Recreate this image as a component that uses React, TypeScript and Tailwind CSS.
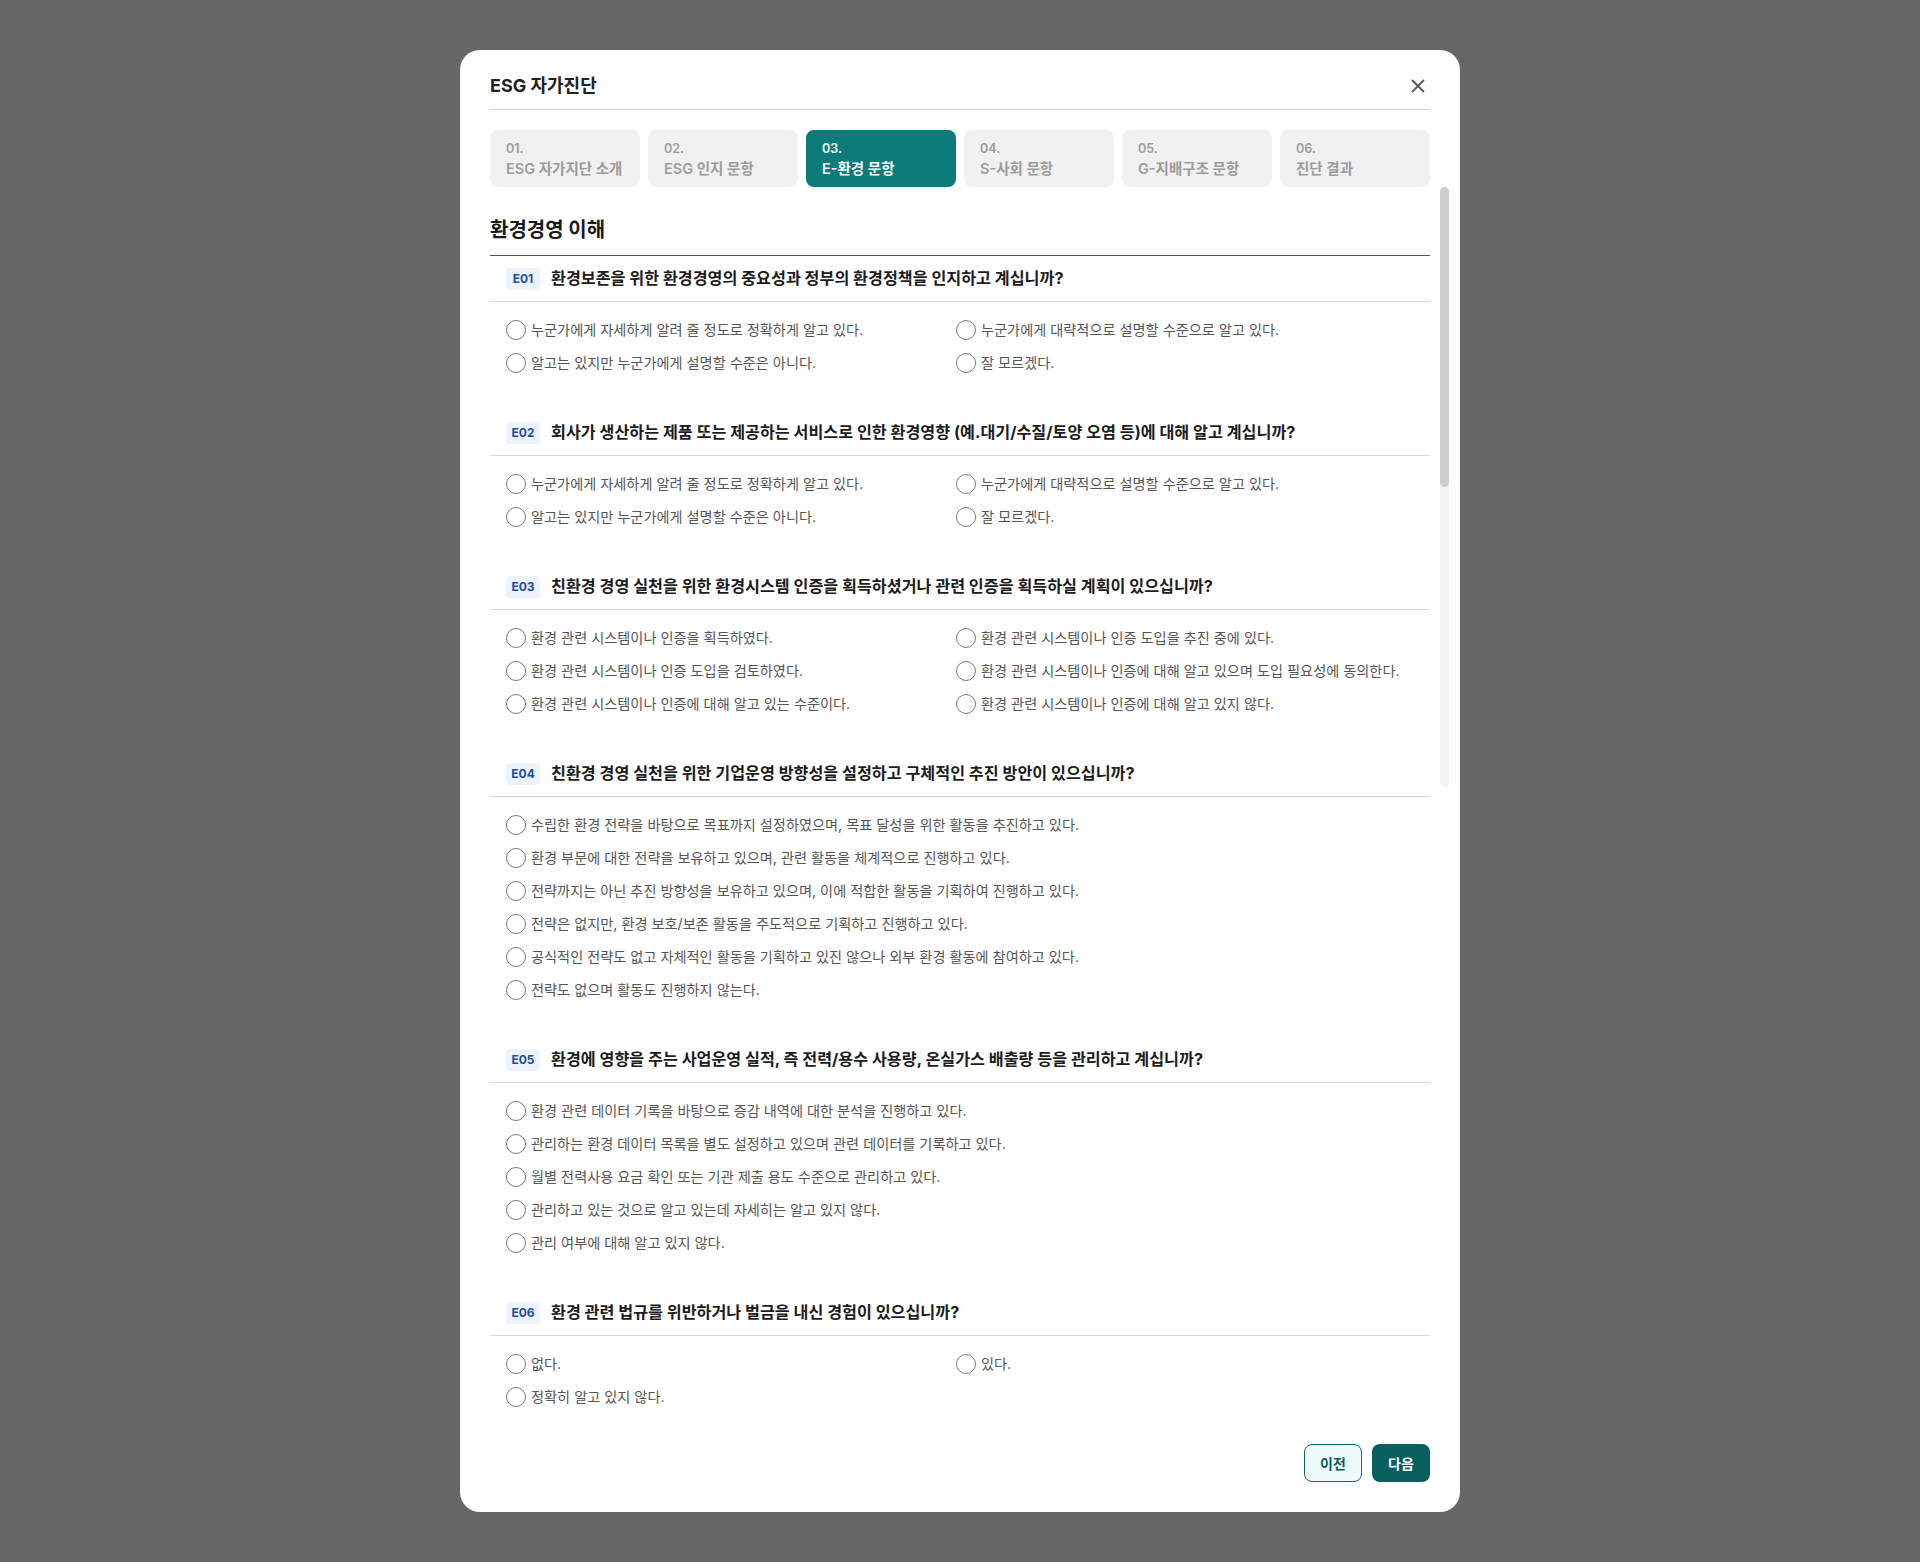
import React from "react";

type Question = {
  code: string;
  title: string;
  options: string[];
  cols: 1 | 2;
};

const knowOptions = [
  "누군가에게 자세하게 알려 줄 정도로 정확하게 알고 있다.",
  "누군가에게 대략적으로 설명할 수준으로 알고 있다.",
  "알고는 있지만 누군가에게 설명할 수준은 아니다.",
  "잘 모르겠다.",
];

const questions: Question[] = [
  {
    code: "E01",
    title: "환경보존을 위한 환경경영의 중요성과 정부의 환경정책을 인지하고 계십니까?",
    options: knowOptions,
    cols: 2,
  },
  {
    code: "E02",
    title:
      "회사가 생산하는 제품 또는 제공하는 서비스로 인한 환경영향 (예.대기/수질/토양 오염 등)에 대해 알고 계십니까?",
    options: knowOptions,
    cols: 2,
  },
  {
    code: "E03",
    title:
      "친환경 경영 실천을 위한 환경시스템 인증을 획득하셨거나 관련 인증을 획득하실 계획이 있으십니까?",
    options: [
      "환경 관련 시스템이나 인증을 획득하였다.",
      "환경 관련 시스템이나 인증 도입을 추진 중에 있다.",
      "환경 관련 시스템이나 인증 도입을 검토하였다.",
      "환경 관련 시스템이나 인증에 대해 알고 있으며 도입 필요성에 동의한다.",
      "환경 관련 시스템이나 인증에 대해 알고 있는 수준이다.",
      "환경 관련 시스템이나 인증에 대해 알고 있지 않다.",
    ],
    cols: 2,
  },
  {
    code: "E04",
    title: "친환경 경영 실천을 위한 기업운영 방향성을 설정하고 구체적인 추진 방안이 있으십니까?",
    options: [
      "수립한 환경 전략을 바탕으로 목표까지 설정하였으며, 목표 달성을 위한 활동을 추진하고 있다.",
      "환경 부문에 대한 전략을 보유하고 있으며, 관련 활동을 체계적으로 진행하고 있다.",
      "전략까지는 아닌 추진 방향성을 보유하고 있으며, 이에 적합한 활동을 기획하여 진행하고 있다.",
      "전략은 없지만, 환경 보호/보존 활동을 주도적으로 기획하고 진행하고 있다.",
      "공식적인 전략도 없고 자체적인 활동을 기획하고 있진 않으나 외부 환경 활동에 참여하고 있다.",
      "전략도 없으며 활동도 진행하지 않는다.",
    ],
    cols: 1,
  },
  {
    code: "E05",
    title:
      "환경에 영향을 주는 사업운영 실적, 즉 전력/용수 사용량, 온실가스 배출량 등을 관리하고 계십니까?",
    options: [
      "환경 관련 데이터 기록을 바탕으로 증감 내역에 대한 분석을 진행하고 있다.",
      "관리하는 환경 데이터 목록을 별도 설정하고 있으며 관련 데이터를 기록하고 있다.",
      "월별 전력사용 요금 확인 또는 기관 제출 용도 수준으로 관리하고 있다.",
      "관리하고 있는 것으로 알고 있는데 자세히는 알고 있지 않다.",
      "관리 여부에 대해 알고 있지 않다.",
    ],
    cols: 1,
  },
  {
    code: "E06",
    title: "환경 관련 법규를 위반하거나 벌금을 내신 경험이 있으십니까?",
    options: ["없다.", "있다.", "정확히 알고 있지 않다."],
    cols: 2,
  },
];

const steps = [
  { no: "01.", label: "ESG 자가지단 소개" },
  { no: "02.", label: "ESG 인지 문항" },
  { no: "03.", label: "E-환경 문항" },
  { no: "04.", label: "S-사회 문항" },
  { no: "05.", label: "G-지배구조 문항" },
  { no: "06.", label: "진단 결과" },
];

const active = 2;

const App: React.FC = () => {
  return (
    <div
      className="min-h-[1562px] w-full bg-[#666666] flex justify-center items-start pt-[50px]"
      style={{ fontFamily: 'Inter, "Noto Sans CJK KR", "Noto Sans", sans-serif' }}
    >
      <div className="relative w-[1000px] rounded-[20px] bg-white px-[30px] pt-[23px] pb-[30px]">
        {/* header */}
        <div className="flex items-center justify-between h-[26px]">
          <h1 className="text-[18px] leading-[26px] font-bold text-[#222222]">ESG 자가진단</h1>
          <button type="button" className="w-6 h-6 flex items-center justify-center">
            <svg width="14" height="14" viewBox="0 0 14 14" fill="none">
              <path d="M1 1L13 13M13 1L1 13" stroke="#5a5a5a" strokeWidth="1.9" />
            </svg>
          </button>
        </div>
        <div className="mt-[10px] h-px bg-[#d4d4d4]" />

        {/* steps */}
        <div className="mt-5 grid grid-cols-6 gap-2">
          {steps.map((s, i) => (
            <div
              key={s.no}
              className={`h-[57px] rounded-lg px-4 pt-[11px] ${
                i === active ? "bg-[#0b7c78] text-white" : "bg-[#f1f1f1] text-[#9b9b9b]"
              }`}
            >
              <div className="text-[12.5px] leading-4 font-semibold">{s.no}</div>
              <div className="mt-[2px] text-[14.5px] leading-5 font-semibold whitespace-nowrap">
                {s.label}
              </div>
            </div>
          ))}
        </div>

        {/* section */}
        <h2 className="mt-[30px] pb-3 border-b border-[#2b5c96] text-[20px] leading-[26px] font-bold text-[#1a1a1a]">
          환경경영 이해
        </h2>

        {questions.map((q) => (
          <div key={q.code}>
            <div className="h-[46px] flex items-center gap-[11px] pl-4 border-b border-[#d9d9d9]">
              <span className="w-[34px] h-[22px] rounded-[4px] bg-[#edf3fc] text-[#1d4f9e] text-[12px] font-bold flex items-center justify-center">
                {q.code}
              </span>
              <span className="text-[16.2px] font-bold text-[#1c1c1c] whitespace-nowrap">
                {q.title}
              </span>
            </div>
            <div
              className={`pt-[11px] pb-[31px] pl-4 pr-6 grid ${
                q.cols === 2 ? "grid-cols-2" : "grid-cols-1"
              }`}
            >
              {q.options.map((o) => (
                <label key={o} className="h-[33px] flex items-center gap-[5px] cursor-pointer">
                  <span className="w-5 h-5 shrink-0 rounded-full border border-[#7a7a7a] bg-white" />
                  <span className="text-[14.2px] text-[#555555] whitespace-nowrap">{o}</span>
                </label>
              ))}
            </div>
          </div>
        ))}

        {/* footer */}
        <div className="flex justify-end gap-[10px]">
          <button
            type="button"
            className="h-[38px] w-[58px] rounded-lg border border-[#0f6a6a] bg-[#effafa] text-[14px] font-bold text-[#0b5b5c]"
          >
            이전
          </button>
          <button
            type="button"
            className="h-[38px] w-[58px] rounded-lg bg-[#075f5e] text-[14px] font-bold text-white"
          >
            다음
          </button>
        </div>

        {/* scrollbar */}
        <div className="absolute right-[11px] top-[137px] w-[9px] h-[600px] rounded-full bg-[#f3f3f3]">
          <div className="h-[300px] w-full rounded-full bg-[#cfcfcf]" />
        </div>
      </div>
    </div>
  );
};

export default App;
